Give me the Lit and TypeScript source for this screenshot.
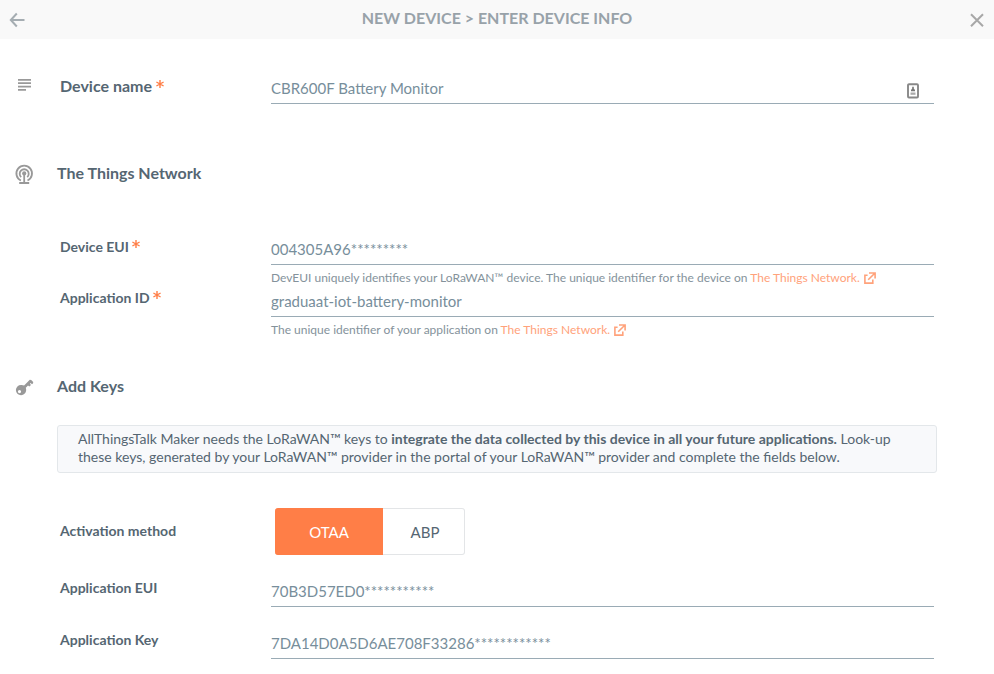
import { LitElement, html, css, svg, nothing } from "lit";
import { customElement, property, state } from "lit/decorators.js";
import { classMap } from "lit/directives/class-map.js";

const externalIcon = html`<svg class="ext" width="12" height="12" viewBox="0 0 12 12" fill="none" stroke="currentColor" stroke-width="1.6">
  <path d="M3.6 3.2H.9V11.1H8.8V7.6M5 1H11.1V6.6M11 1L4.2 7.8" />
</svg>`;

const requiredMark = html`<svg class="star" width="8" height="8" viewBox="0 0 8 8" fill="none" stroke="currentColor" stroke-width="1.4">
  <path d="M4 0V8M.4 2L7.6 6M7.6 2L.4 6" />
</svg>`;

const shapes = {
  lines: svg`<path d="M6 7H19V8.7H6zM6 10.2H19V11.9H6zM6 13.8H19V15.5H6zM6 17H14V18.7H6z" />`,
  antenna: svg`<g fill="none" stroke="currentColor" stroke-width="1.8">
      <path d="M8.9 18.5A7.8 7.8 0 1 1 15.5 18.5" />
      <path d="M9.2 15.1A4.5 4.5 0 1 1 15.2 15.1" />
      <path d="M12.2 11.5V20.6M7.2 21H17.2" />
    </g><circle cx="12.2" cy="11.4" r="2.1" />`,
  key: svg`<path fill-rule="evenodd" d="M9 10C10.2 9.9 11.2 10.1 12.1 10.5L17.8 4.8L19.2 4.9L21.2 7L21.1 8.2L20 9.3L18.6 8L17.9 8.7L19 10L17.3 11.6L16 10.4L13.8 12.7C15.2 16.4 12.6 20.2 9 20.2A5.1 5.1 0 0 1 9 10ZM7.5 15A1.6 1.6 0 1 0 7.5 18.2A1.6 1.6 0 1 0 7.5 15Z" />`,
};

@customElement("section-icon")
class SectionIcon extends LitElement {
  @property() name: keyof typeof shapes = "lines";
  static styles = css`
    :host { display: block; width: 24px; height: 24px; color: #999; }
    svg { display: block; }
  `;
  render() {
    return html`<svg width="24" height="24" viewBox="0 0 24 24" fill="currentColor">${shapes[this.name]}</svg>`;
  }
}

@customElement("form-field")
class FormField extends LitElement {
  @property() label = "";
  @property() value = "";
  @property() help = "";
  @property({ type: Boolean }) required = false;
  @property({ type: Boolean }) large = false;
  @property({ type: Boolean }) autofill = false;
  static styles = css`
    :host { display: grid; grid-template-columns: 211px 663px; height: 52px; }
    .label { font-size: 14px; line-height: 20px; font-weight: 700; color: #556672; padding-top: var(--label-top, 3px); }
    .large { font-size: 16px; padding-top: 4px; }
    .star { color: #ff7e47; vertical-align: 4px; }
    .input { display: flex; justify-content: space-between; align-items: center; box-sizing: border-box; height: 32px;
      padding-top: 1px; border-bottom: 1px solid #9aabb5; font-size: 15px; color: #778e9b; }
    .fill { margin: 5px 15px 0 0; }
    .help { font-size: 12px; line-height: 20px; padding-top: 3px; color: #84929b; white-space: nowrap; }
    .link { color: #ffa27b; }
    .ext { vertical-align: -2px; margin-left: 1px; }
  `;
  render() {
    return html`
      <div class=${classMap({ label: true, large: this.large })}>
        ${this.label}${this.required ? html` ${requiredMark}` : nothing}
      </div>
      <div>
        <div class="input"><span>${this.value}</span>${this.autofill
          ? html`<svg class="fill" width="12" height="16" viewBox="0 0 12 16">
              <rect x="1" y="1.2" width="10" height="13.3" rx="1" fill="#fff" stroke="#888" stroke-width="1.9" />
              <path d="M5.2 3.8H6.8V5.5L8 7V8.2H4V7L5.2 5.5z" fill="#777" />
              <path d="M3.5 9.5H8.5V11.8H3.5z" fill="#aaa" />
            </svg>`
          : nothing}</div>
        ${this.help
          ? html`<div class="help">${this.help} <span class="link">The Things Network. ${externalIcon}</span></div>`
          : nothing}
      </div>
    `;
  }
}

@customElement("app-root")
class AppRoot extends LitElement {
  @state() private method = "OTAA";
  static styles = css`
    :host { display: block; width: 994px; height: 674px; overflow: hidden; background: #fff;
      font-family: Lato, Carlito, sans-serif; color: #556672; }
    .header { display: grid; grid-template-columns: 18px 1fr 18px; align-items: center; height: 39px; box-sizing: border-box;
      padding: 0 8px; background: #f9f9f9; color: #98a2a9; }
    .title { text-align: center; font-size: 16px; line-height: 20px; font-weight: 700; margin-top: -3px; }
    .nav { display: block; fill: none; stroke: #a5adb2; stroke-width: 2; }
    .close { stroke: #a8a8a8; }
    .section { display: grid; grid-template-columns: 45px 1fr; padding-left: 12px; align-items: center; height: 24px; }
    .heading { font-size: 16px; line-height: 20px; font-weight: 700; padding-bottom: 2px; }
    .name { grid-template-columns: 48px 1fr; align-items: start; height: 52px; margin-top: 33px; }
    .network { margin-top: 38px; }
    .group { padding-left: 60px; }
    .ids { padding-top: 47px; }
    .ids form-field:first-child { --label-top: 4px; }
    .keys { margin-top: 38px; }
    .notice { box-sizing: border-box; width: 880px; height: 48px; margin: 26px 0 0 57px; padding: 4px 20px 0; border: 1px solid #e3e7ea;
      border-radius: 3px; background: #f8f9fb; font-size: 14px; line-height: 18px; }
    .activation { display: grid; grid-template-columns: 215px 190px; align-items: center; margin: 35px 0 20px; height: 47px; }
    .label { font-size: 14px; font-weight: 700; padding-bottom: 2px; }
    .toggle { display: flex; height: 47px; }
    .option { font: inherit; font-size: 15px; padding: 1px 0 0 3px; color: inherit; background: #fff; border: 1px solid #e3e5e7;
      border-left: 0; width: 82px; border-radius: 0 3px 3px 0; }
    .option:first-child { width: 108px; padding-left: 1px; border-radius: 3px 0 0 3px; }
    .option.active { color: #fff; background: #ff7e47; border-color: #ff7e47; }
  `;
  render() {
    return html`
      <header class="header">
        <svg class="nav" width="18" height="18" viewBox="0 0 18 18"><path d="M8.8 2.5L2.8 9L8.8 15.5M3 9H16.5" /></svg>
        <div class="title">NEW DEVICE &gt; ENTER DEVICE INFO</div>
        <svg class="nav close" width="18" height="18" viewBox="0 0 18 18"><path d="M3 3.2L15 15.2M15 3.2L3 15.2" /></svg>
      </header>
      <div class="section name">
        <section-icon name="lines"></section-icon>
        <form-field label="Device name" value="CBR600F Battery Monitor" required large autofill></form-field>
      </div>
      <div class="section network">
        <section-icon name="antenna"></section-icon>
        <div class="heading">The Things Network</div>
      </div>
      <div class="group ids">
        <form-field label="Device EUI" value="004305A96*********" required
          help="DevEUI uniquely identifies your LoRaWAN™ device. The unique identifier for the device on"></form-field>
        <form-field label="Application ID" value="graduaat-iot-battery-monitor" required
          help="The unique identifier of your application on"></form-field>
      </div>
      <div class="section keys">
        <section-icon name="key"></section-icon>
        <div class="heading">Add Keys</div>
      </div>
      <div class="notice">
        AllThingsTalk Maker needs the LoRaWAN™ keys to <b>integrate the data collected by this device in all your future
        applications.</b> Look-up these keys, generated by your LoRaWAN™ provider in the portal of your LoRaWAN™ provider and
        complete the fields below.
      </div>
      <div class="group">
        <div class="activation">
          <div class="label">Activation method</div>
          <div class="toggle">
            ${["OTAA", "ABP"].map(
              (m) => html`<button class=${classMap({ option: true, active: m === this.method })}
                @click=${() => (this.method = m)}>${m}</button>`
            )}
          </div>
        </div>
        <form-field label="Application EUI" value="70B3D57ED0***********"></form-field>
        <form-field label="Application Key" value="7DA14D0A5D6AE708F33286************"></form-field>
      </div>
    `;
  }
}
